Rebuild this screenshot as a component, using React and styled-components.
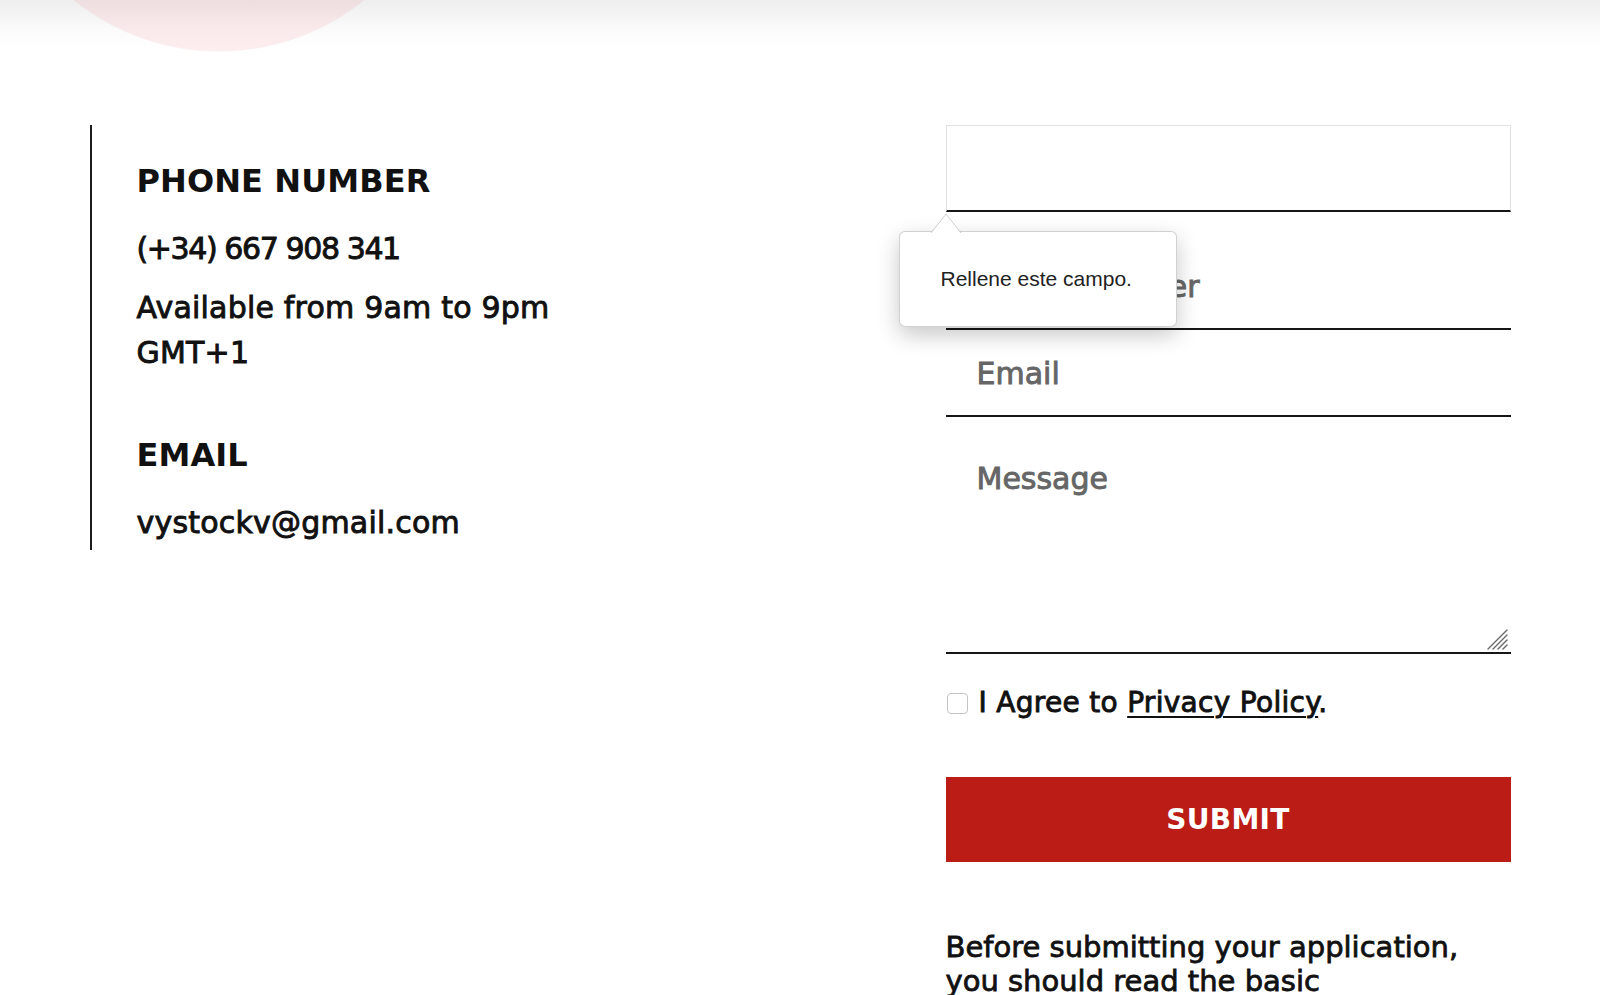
import React from "react";
import styled, { createGlobalStyle } from "styled-components";

const GlobalStyle = createGlobalStyle`
  html, body {
    margin: 0;
    padding: 0;
    background: #fff;
  }

  body {
    font-family: "DejaVu Sans", "Liberation Sans", sans-serif;
    color: #111;
    overflow: hidden;
  }

  * {
    box-sizing: border-box;
  }
`;

const Page = styled.div`
  min-height: 995px;
  background:
    radial-gradient(circle 232px at 219px -180px, rgba(232, 80, 90, 0.1) 99.5%, transparent 100%),
    linear-gradient(to bottom, #eeeeee 0, #fbfbfb 30px, #fff 50px);
  background-repeat: no-repeat;
`;

const Container = styled.section`
  width: 1421px;
  margin: 0 auto;
  padding-top: 125px;
  display: grid;
  grid-template-columns: 1fr 565px;
  align-items: start;
`;

const Info = styled.div`
  border-left: 2px solid #1c1c1c;
  padding: 37px 0 5px 45px;
`;

const InfoGroup = styled.div`
  margin-top: ${(p) => p.$gap || 0}px;
`;

const InfoTitle = styled.h3`
  margin: 0;
  font-size: 32px;
  font-weight: 700;
  line-height: 38px;
  letter-spacing: 0.1px;
  color: #111;
`;

const InfoText = styled.p`
  margin: ${(p) => p.$gap || 0}px 0 0;
  max-width: 480px;
  font-size: 30px;
  font-weight: 400;
  line-height: 45px;
  letter-spacing: ${(p) => p.$tight ? "-1.4px" : "0.2px"};
  -webkit-text-stroke: 0.9px currentColor;
`;

const Form = styled.form`
  position: relative;
  display: flex;
  flex-direction: column;
`;

const Field = styled.input`
  display: block;
  width: 100%;
  height: 87px;
  margin: 0 0 ${(p) => p.$after || 0}px;
  padding: 2px 31px 0;
  border: 0;
  border-bottom: 2px solid #161616;
  ${(p) =>
    p.$focused &&
    `
    border-top: 1px solid #e2e2e2;
    border-left: 1px solid #e2e2e2;
    border-right: 1px solid #e2e2e2;
  `}
  background: #fff;
  font-family: inherit;
  font-size: 30px;
  color: #111;
  outline: none;
  -webkit-text-stroke: 0.9px #666;

  &::placeholder {
    color: #666;
    opacity: 1;
  }
`;

const AreaWrap = styled.div`
  position: relative;
`;

const Area = styled.textarea`
  display: block;
  width: 100%;
  height: 237px;
  padding: 39px 31px;
  border: 0;
  border-bottom: 2px solid #161616;
  resize: none;
  font-family: inherit;
  font-size: 30px;
  line-height: 45px;
  color: #111;
  outline: none;
  -webkit-text-stroke: 0.9px #666;

  &::placeholder {
    color: #666;
    opacity: 1;
  }
`;

const Grip = styled.svg`
  position: absolute;
  right: 3px;
  bottom: 4px;
  width: 22px;
  height: 22px;
`;

const AgreeRow = styled.label`
  display: flex;
  align-items: center;
  gap: 11px;
  margin-top: 29px;
  font-size: 28px;
  line-height: 40px;
  letter-spacing: 0.3px;
  -webkit-text-stroke: 0.9px currentColor;

  a {
    color: inherit;
    text-decoration: underline;
    text-decoration-thickness: 2px;
    text-underline-offset: 4px;
  }
`;

const Check = styled.input`
  appearance: none;
  flex: none;
  width: 21px;
  height: 21px;
  margin: 0 0 0 1px;
  border: 1px solid #c4c4c4;
  border-radius: 4px;
  background: #fff;
`;

const Submit = styled.button`
  height: 85px;
  margin-top: 54px;
  border: 0;
  background: #bb1c16;
  color: #fff;
  font-family: inherit;
  font-size: 28px;
  font-weight: 700;
  letter-spacing: 0.3px;
  cursor: pointer;
`;

const Note = styled.p`
  margin: 68px 0 0;
  max-width: 540px;
  font-size: 29px;
  line-height: 34px;
  -webkit-text-stroke: 0.8px currentColor;
`;

const Bubble = styled.div`
  position: absolute;
  left: -47px;
  top: 106px;
  z-index: 2;
  width: 278px;
  height: 96px;
  display: flex;
  align-items: center;
  padding-left: 41px;
  background: #fff;
  border: 1px solid rgba(0, 0, 0, 0.18);
  border-radius: 6px;
  box-shadow: 0 8px 22px rgba(0, 0, 0, 0.22);
  font-family: "Liberation Sans", Arial, sans-serif;
  font-size: 21px;
  color: #222;
`;

const BubbleArrow = styled.svg`
  position: absolute;
  left: 30px;
  top: -19px;
  width: 32px;
  height: 20px;
  overflow: visible;
`;

export default function App() {
  return (
    <>
      <GlobalStyle />
      <Page>
        <Container>
          <Info>
            <InfoGroup>
              <InfoTitle>PHONE NUMBER</InfoTitle>
              <InfoText $gap={26} $tight>(+34) 667 908 341</InfoText>
              <InfoText $gap={14}>Available from 9am to 9pm GMT+1</InfoText>
            </InfoGroup>
            <InfoGroup $gap={61}>
              <InfoTitle>EMAIL</InfoTitle>
              <InfoText $gap={26}>vystockv@gmail.com</InfoText>
            </InfoGroup>
          </Info>

          <Form onSubmit={(e) => e.preventDefault()}>
            <Field type="text" $focused $after={31} />
            <Field type="tel" placeholder="Phone Number" />
            <Field type="email" placeholder="Email" />
            <AreaWrap>
              <Area placeholder="Message" />
              <Grip viewBox="0 0 22 22">
                <g stroke="#6a6a6a" strokeWidth="1.4" strokeLinecap="round">
                  <line x1="21" y1="2" x2="2" y2="21" />
                  <line x1="21" y1="7" x2="7" y2="21" />
                  <line x1="21" y1="12" x2="12" y2="21" />
                  <line x1="21" y1="17" x2="17" y2="21" />
                </g>
              </Grip>
            </AreaWrap>
            <AgreeRow>
              <Check type="checkbox" />
              <span>
                I Agree to <a href="#privacy">Privacy Policy</a>.
              </span>
            </AgreeRow>
            <Submit type="submit">SUBMIT</Submit>
            <Note>
              Before submitting your application, you should read the basic
              information about data protection below.
            </Note>

            <Bubble>
              <BubbleArrow viewBox="0 0 32 20">
                <path
                  d="M1 20 L16 1 L31 20"
                  fill="#fff"
                  stroke="rgba(0,0,0,0.18)"
                  strokeWidth="1"
                />
              </BubbleArrow>
              Rellene este campo.
            </Bubble>
          </Form>
        </Container>
      </Page>
    </>
  );
}
